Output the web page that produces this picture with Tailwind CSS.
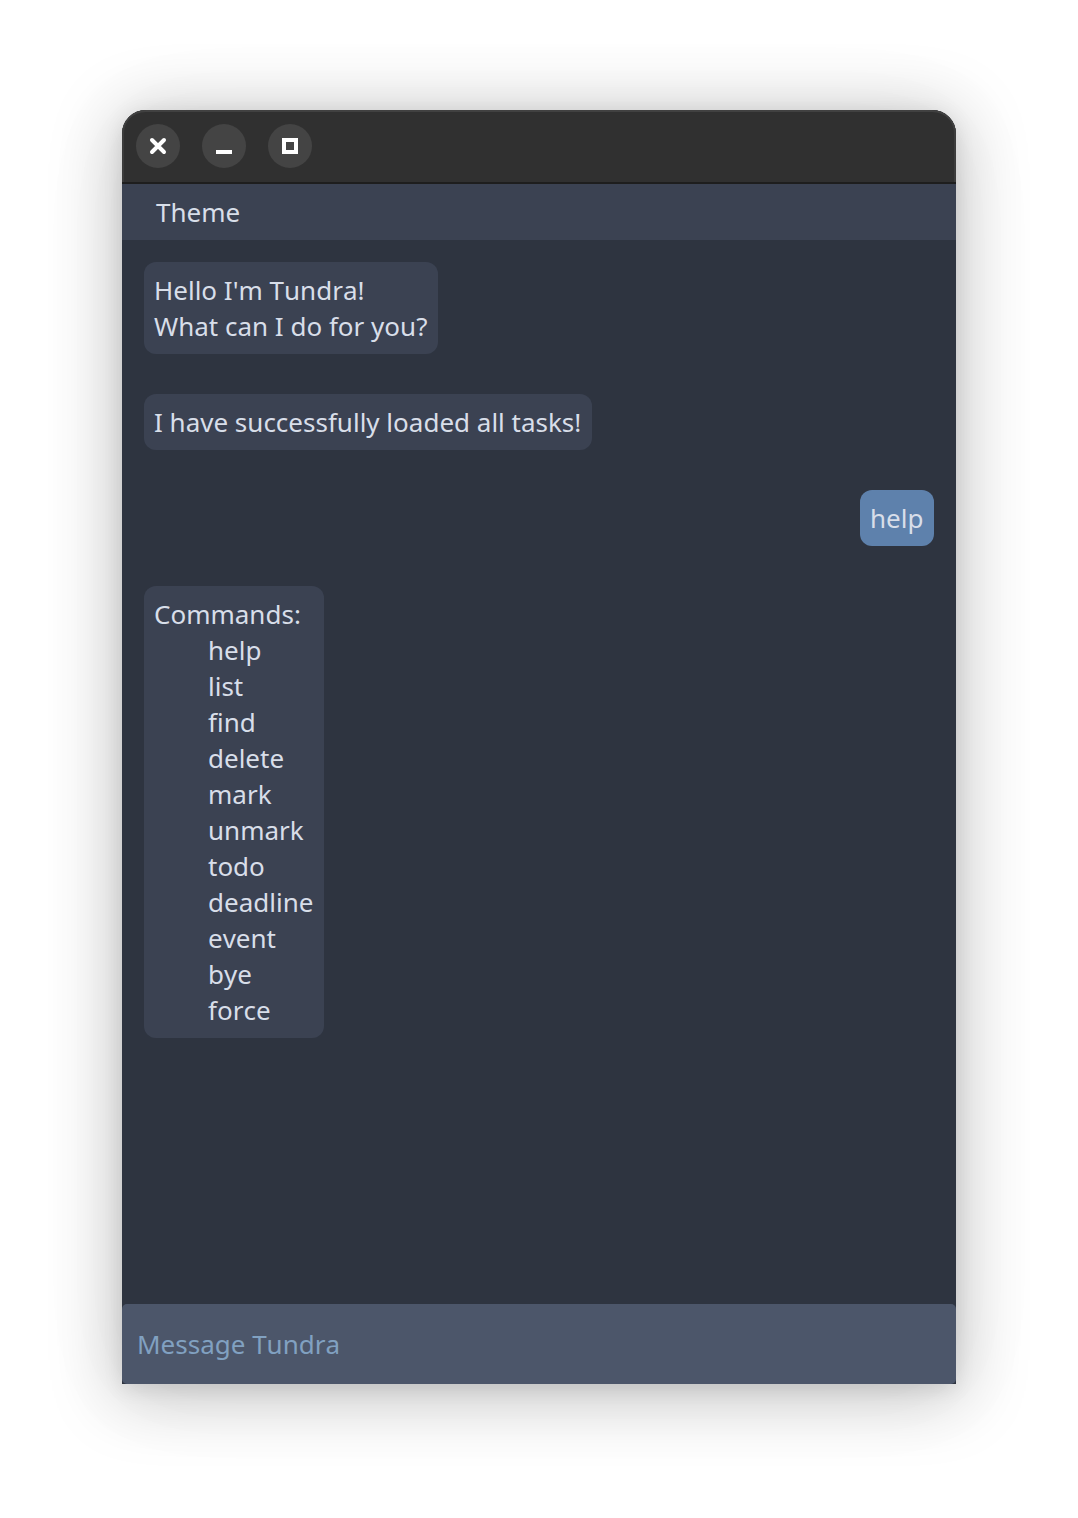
<!DOCTYPE html>
<html lang="en">
<head>
<meta charset="utf-8">
<title>Tundra</title>
<script src="https://cdn.jsdelivr.net/npm/@tailwindcss/browser@4"></script>
</head>
<body class="bg-white h-[1518px] overflow-hidden pt-[110px] pl-[122px] font-['Noto_Sans',sans-serif] [font-kerning:none] text-[26px] leading-9 text-[#d8dee9]">
<main class="w-[834px] h-[1274px] flex flex-col rounded-t-[24px] bg-[#2e3440] shadow-[0_4px_20px_rgba(0,0,0,0.09),0_8px_68px_6px_rgba(0,0,0,0.22),0_6px_110px_rgba(0,0,0,0.04)]">
  <header class="h-[74px] shrink-0 flex gap-[22px] pt-[14px] pl-[14px] rounded-t-[24px] bg-[#303030] border-b-2 border-[#1e1e1e] shadow-[inset_0_2px_0_#414141,inset_2px_0_0_#3c3c3c,inset_-2px_0_0_#3c3c3c]">
    <svg class="size-11" viewBox="0 0 44 44"><circle cx="22" cy="22" r="22" fill="#444"/><path d="M16 16l12 12M28 16l-12 12" stroke="#fff" stroke-width="4" stroke-linecap="round"/></svg>
    <svg class="size-11" viewBox="0 0 44 44"><circle cx="22" cy="22" r="22" fill="#444"/><path d="M14 28h16" stroke="#fff" stroke-width="4"/></svg>
    <svg class="size-11" viewBox="0 0 44 44"><circle cx="22" cy="22" r="22" fill="#444"/><path d="M16 16h12v12H16z" fill="none" stroke="#fff" stroke-width="4"/></svg>
  </header>
  <nav class="h-14 shrink-0 bg-[#3b4252] pl-[34px] pt-[10px]">Theme</nav>
  <section class="flex-1 flex flex-col items-start gap-10 px-[22px] pt-[22px]">
    <div class="rounded-xl bg-[#3b4252] h-[92px] w-[294px] px-[10px] py-[10px] whitespace-nowrap"><p>Hello I'm Tundra!</p><p>What can I do for you?</p></div>
    <div class="rounded-xl bg-[#3b4252] h-14 w-[448px] px-[10px] py-[10px] whitespace-nowrap">I have successfully loaded all tasks!</div>
    <div class="rounded-xl bg-[#5e81ac] h-14 w-[74px] px-[10px] py-[10px] self-end">help</div>
    <div class="rounded-xl bg-[#3b4252] h-[452px] w-[180px] px-[10px] py-[10px] whitespace-nowrap">
      <p>Commands:</p>
      <ul class="pl-[54px]"><li>help</li><li>list</li><li>find</li><li>delete</li><li>mark</li><li>unmark</li><li>todo</li><li>deadline</li><li>event</li><li>bye</li><li>force</li></ul>
    </div>
  </section>
  <footer class="h-20 shrink-0 rounded-[5px] bg-[#4c566a] text-[#81a1c1] pl-[15px] pt-[22px]">Message Tundra</footer>
</main>
</body>
</html>
